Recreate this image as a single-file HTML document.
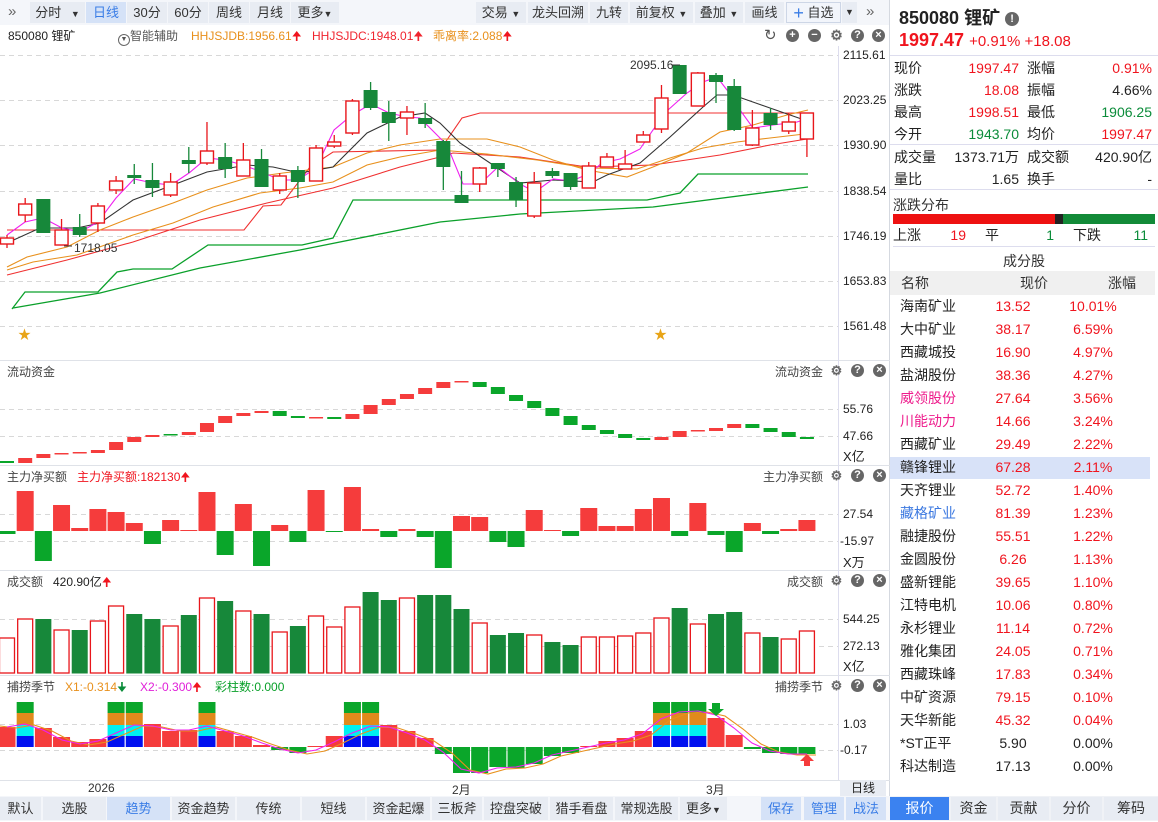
<!DOCTYPE html>
<html><head><meta charset="utf-8">
<style>
*{margin:0;padding:0;box-sizing:border-box}
body{width:1158px;height:821px;overflow:hidden;background:#fff;font-family:"Liberation Sans","Noto Sans CJK SC",sans-serif;font-size:13px;color:#222;position:relative}
.a{position:absolute;white-space:nowrap}
.btn{position:absolute;top:2px;height:21px;background:#e8ecf3;color:#333;font-size:13px;line-height:21px;text-align:center}
.bb{position:absolute;top:797px;height:23px;background:#e8ecf3;color:#333;font-size:13px;line-height:23px;text-align:center}
.btn.sel,.bb.sel{background:#d5e2f7;color:#3a7de6}
.ic{position:absolute;width:13px;height:13px;border-radius:50%;background:#666;color:#fff;font-size:11px;line-height:13px;text-align:center;font-weight:bold}
.r{color:#f0141e}.g{color:#0b8c3a}
.lbl{position:absolute;font-size:12px;color:#222}
.row{position:absolute;left:890px;width:262px;height:23px;font-size:14px;line-height:23px}
.row span{position:absolute}
</style></head><body>
<div class="a" style="left:0;top:0;width:890px;height:25px;background:#f4f6fa"></div>
<div class="a" style="left:8px;top:3px;font-size:15px;color:#666">»</div>
<div class="btn" style="left:30px;width:55px">分时 <span style="font-size:9px;margin-left:6px">▼</span></div>
<div class="btn sel" style="left:86px;width:40px">日线</div>
<div class="btn" style="left:127px;width:40px">30分</div>
<div class="btn" style="left:168px;width:40px">60分</div>
<div class="btn" style="left:209px;width:40px">周线</div>
<div class="btn" style="left:250px;width:40px">月线</div>
<div class="btn" style="left:291px;width:48px">更多<span style="font-size:9px">▼</span></div>
<div class="btn" style="left:476px;width:50px">交易 <span style="font-size:9px">▼</span></div>
<div class="btn" style="left:528px;width:60px">龙头回溯</div>
<div class="btn" style="left:590px;width:38px">九转</div>
<div class="btn" style="left:630px;width:63px">前复权 <span style="font-size:9px">▼</span></div>
<div class="btn" style="left:695px;width:48px">叠加 <span style="font-size:9px">▼</span></div>
<div class="btn" style="left:745px;width:39px">画线</div>
<div class="btn" style="left:786px;width:55px;background:#f2f5fb;border:1px solid #cdd6e6;line-height:19px"><span style="color:#3a7de6;font-size:18px;vertical-align:-2px">+</span> 自选</div>
<div class="btn" style="left:842px;width:15px;font-size:9px">▼</div>
<div class="a" style="left:866px;top:3px;font-size:15px;color:#666">»</div>
<div class="a" style="left:889px;top:0;width:1px;height:821px;background:#d5d9e0"></div>

<div class="a" style="left:8px;top:27px;font-size:12px">850080 锂矿</div>
<div class="a" style="left:118px;top:27px;font-size:12px;color:#555"><span style="display:inline-block;width:12px;height:12px;border:1px solid #666;border-radius:50%;font-size:7px;line-height:10px;text-align:center;vertical-align:-1px">▼</span>智能辅助</div>
<div class="a" style="left:191px;top:27px;font-size:12px;color:#e8901c">HHJSJDB:1956.61<span class="r">🠉</span></div>
<div class="a" style="left:312px;top:27px;font-size:12px;color:#f0242e">HHJSJDC:1948.01🠉</div>
<div class="a" style="left:433px;top:27px;font-size:12px;color:#e8901c">乖离率:2.088<span class="r">🠉</span></div>
<div class="a" style="left:764px;top:26px;font-size:15px;color:#555">↻</div>
<div class="ic" style="left:786px;top:29px">+</div>
<div class="ic" style="left:808px;top:29px">−</div>
<div class="ic" style="left:830px;top:29px;background:none;color:#666;font-size:14px">⚙</div>
<div class="ic" style="left:851px;top:29px">?</div>
<div class="ic" style="left:872px;top:29px">×</div>

<svg class="a" style="left:0;top:0" width="890" height="821" id="sv"></svg>

<div class="lbl" style="left:843px;top:48px">2115.61</div>
<div class="lbl" style="left:843px;top:93px">2023.25</div>
<div class="lbl" style="left:843px;top:138px">1930.90</div>
<div class="lbl" style="left:843px;top:184px">1838.54</div>
<div class="lbl" style="left:843px;top:229px">1746.19</div>
<div class="lbl" style="left:843px;top:274px">1653.83</div>
<div class="lbl" style="left:843px;top:319px">1561.48</div>
<div class="lbl" style="left:74px;top:241px;color:#333">1718.05</div>
<div class="lbl" style="left:630px;top:58px;color:#333">2095.16</div>
<div class="a" style="left:18px;top:324px;color:#e8a417;font-size:13px">★</div>
<div class="a" style="left:654px;top:324px;color:#e8a417;font-size:13px">★</div>

<div class="lbl" style="left:7px;top:363px;color:#444">流动资金</div>
<div class="lbl" style="left:775px;top:363px;color:#444">流动资金</div>
<div class="lbl" style="left:843px;top:402px">55.76</div>
<div class="lbl" style="left:843px;top:429px">47.66</div>
<div class="lbl" style="left:843px;top:446px;font-size:13px">X亿</div>

<div class="lbl" style="left:7px;top:468px;color:#444">主力净买额</div>
<div class="lbl" style="left:77px;top:468px;color:#f0141e">主力净买额:182130🠉</div>
<div class="lbl" style="left:763px;top:468px;color:#444">主力净买额</div>
<div class="lbl" style="left:843px;top:507px">27.54</div>
<div class="lbl" style="left:840px;top:534px">-15.97</div>
<div class="lbl" style="left:843px;top:552px;font-size:13px">X万</div>

<div class="lbl" style="left:7px;top:573px;color:#444">成交额</div>
<div class="lbl" style="left:53px;top:573px;color:#222">420.90亿<span class="r">🠉</span></div>
<div class="lbl" style="left:787px;top:573px;color:#444">成交额</div>
<div class="lbl" style="left:843px;top:612px">544.25</div>
<div class="lbl" style="left:843px;top:639px">272.13</div>
<div class="lbl" style="left:843px;top:656px;font-size:13px">X亿</div>

<div class="lbl" style="left:7px;top:678px;color:#444">捕捞季节</div>
<div class="lbl" style="left:65px;top:678px;color:#e8901c">X1:-0.314<span class="g">🠋</span></div>
<div class="lbl" style="left:140px;top:678px;color:#e020d8">X2:-0.300<span class="r">🠉</span></div>
<div class="lbl" style="left:215px;top:678px;color:#0aa02a">彩柱数:0.000</div>
<div class="lbl" style="left:775px;top:678px;color:#444">捕捞季节</div>
<div class="lbl" style="left:843px;top:717px">1.03</div>
<div class="lbl" style="left:840px;top:743px">-0.17</div>

<div class="lbl" style="left:88px;top:781px;color:#333">2026</div>
<div class="lbl" style="left:452px;top:781px;color:#333">2月</div>
<div class="lbl" style="left:706px;top:781px;color:#333">3月</div>
<div class="a" style="left:840px;top:780px;width:46px;height:16px;background:#e8ecf3;font-size:12px;line-height:16px;text-align:center">日线</div>

<div class="a" style="left:0;top:796px;width:890px;height:25px;background:#f4f6fa"></div>
<div class="bb" style="left:0;width:41px">默认</div>
<div class="bb" style="left:43px;width:63px">选股</div>
<div class="bb sel" style="left:107px;width:63px">趋势</div>
<div class="bb" style="left:172px;width:63px">资金趋势</div>
<div class="bb" style="left:237px;width:63px">传统</div>
<div class="bb" style="left:302px;width:63px">短线</div>
<div class="bb" style="left:367px;width:63px">资金起爆</div>
<div class="bb" style="left:432px;width:50px">三板斧</div>
<div class="bb" style="left:484px;width:64px">控盘突破</div>
<div class="bb" style="left:550px;width:63px">猎手看盘</div>
<div class="bb" style="left:615px;width:63px">常规选股</div>
<div class="bb" style="left:680px;width:47px">更多<span style="font-size:9px">▼</span></div>
<div class="bb sel" style="left:761px;width:40px">保存</div>
<div class="bb sel" style="left:804px;width:40px">管理</div>
<div class="bb sel" style="left:846px;width:40px">战法</div>
<div class="a" style="left:890px;top:796px;width:268px;height:25px;background:#f0f2f6"></div>
<div class="bb" style="left:890px;width:59px;background:#3b82f0;color:#fff;font-size:14px">报价</div>
<div class="bb" style="left:951px;width:45px;font-size:14px">资金</div>
<div class="bb" style="left:998px;width:51px;font-size:14px">贡献</div>
<div class="bb" style="left:1051px;width:51px;font-size:14px">分价</div>
<div class="bb" style="left:1104px;width:54px;font-size:14px">筹码</div>

<div class="a" style="left:899px;top:4px;font-size:18px;font-weight:bold;color:#222">850080 锂矿 <span style="display:inline-block;width:14px;height:14px;border-radius:50%;background:#666;color:#fff;font-size:11px;line-height:14px;text-align:center;vertical-align:2px">!</span></div>
<div class="a r" style="left:899px;top:30px;font-size:18px;font-weight:bold">1997.47 <span style="font-size:15px;font-weight:normal">+0.91% +18.08</span></div>
<div class="a" style="left:890px;top:55px;width:268px;height:1px;background:#dde"></div>
<div class="row" style="top:57px"><span style="left:4px">现价</span><span class="r" style="right:133px">1997.47</span><span style="left:137px">涨幅</span><span class="r" style="right:0">0.91%</span></div>
<div class="row" style="top:79px"><span style="left:4px">涨跌</span><span class="r" style="right:133px">18.08</span><span style="left:137px">振幅</span><span style="right:0">4.66%</span></div>
<div class="row" style="top:101px"><span style="left:4px">最高</span><span class="r" style="right:133px">1998.51</span><span style="left:137px">最低</span><span class="g" style="right:0">1906.25</span></div>
<div class="row" style="top:123px"><span style="left:4px">今开</span><span class="g" style="right:133px">1943.70</span><span style="left:137px">均价</span><span class="r" style="right:0">1997.47</span></div>
<div class="a" style="left:890px;top:144px;width:268px;height:1px;background:#dde"></div>
<div class="row" style="top:146px"><span style="left:4px">成交量</span><span style="right:133px">1373.71万</span><span style="left:137px">成交额</span><span style="right:0">420.90亿</span></div>
<div class="row" style="top:168px"><span style="left:4px">量比</span><span style="right:133px">1.65</span><span style="left:137px">换手</span><span style="right:0">-</span></div>
<div class="a" style="left:890px;top:189px;width:268px;height:1px;background:#dde"></div>
<div class="a" style="left:893px;top:195px;font-size:14px;color:#333">涨跌分布</div>
<div class="a" style="left:893px;top:214px;width:162px;height:10px;background:#ee1111"></div>
<div class="a" style="left:1055px;top:214px;width:8px;height:10px;background:#222"></div>
<div class="a" style="left:1063px;top:214px;width:92px;height:10px;background:#128a38"></div>
<div class="row" style="top:224px"><span style="left:3px">上涨</span><span class="r" style="right:186px">19</span><span style="left:95px">平</span><span class="g" style="right:98px">1</span><span style="left:183px">下跌</span><span class="g" style="right:4px">11</span></div>
<div class="a" style="left:893px;top:246px;width:262px;height:1px;background:#dde"></div>
<div class="a" style="left:1003px;top:251px;font-size:14px;color:#333">成分股</div>
<div class="a" style="left:890px;top:271px;width:265px;height:24px;background:#f0f0f0"></div>
<div class="row" style="top:272px;color:#333"><span style="left:11px">名称</span><span style="left:130px">现价</span><span style="left:218px">涨幅</span></div>
<div class="a" style="left:890px;top:457px;width:260px;height:22px;background:#d8e2f8"></div>
<div id="list"></div>

<script>
var NS="http://www.w3.org/2000/svg",sv=document.getElementById('sv');
function el(t,a){var e=document.createElementNS(NS,t);for(var k in a)e.setAttribute(k,a[k]);sv.appendChild(e);return e}
function X(i){return 7+18.18*i}
[360,465,570,675,780].forEach(function(y){el('line',{x1:0,x2:890,y1:y+.5,y2:y+.5,stroke:'#dfe2e8'})});
el('line',{x1:838.5,x2:838.5,y1:46,y2:780,stroke:'#dde'});
[55,100,145,191,236,281,326,409,436,514,541,619,646,724,750].forEach(function(y){el('line',{x1:0,x2:838,y1:y+.5,y2:y+.5,stroke:'#d8d8d8','stroke-dasharray':'5,4'})});
var C=[['r',238,244,235,248],['r',204,215,198,222],['g',199,233,199,233],['r',230,245,219,245],['g',227,235,214,237],['r',206,223,203,232],['r',181,190,176,194],['g',175,178,164,184],['g',180,188,163,197],['r',182,195,173,197],['g',160,164,147,173],['r',151,163,122,165],['g',157,169,143,178],['r',160,176,143,176],['g',159,187,149,187],['r',176,190,173,194],['g',170,182,166,198],['r',148,181,145,181],['r',142,146,135,148],['r',101,133,99,135],['g',90,108,82,110],['g',112,123,101,141],['r',112,118,106,135],['g',118,124,103,128],['g',141,167,140,190],['g',195,203,171,203],['r',168,184,167,192],['g',163,169,163,177],['g',182,200,177,207],['r',183,216,172,218],['g',171,176,168,178],['g',173,187,173,190],['r',166,188,162,188],['r',157,167,153,167],['r',164,169,150,169],['r',135,142,131,142],['r',98,129,85,133],['g',65,94,65,94],['r',73,106,72,106],['g',75,82,73,103],['g',86,130,79,131],['r',128,145,110,146],['g',113,125,108,130],['r',122,131,113,134],['r',113,139,113,157]];
function pl(p,c,w){el('polyline',{points:p,fill:'none',stroke:c,'stroke-width':w||1.1})}
pl('12,309 25,292 98,292 117,272 133,269 172,269 208,245 302,245 333,238 353,200 440,200 647,200 680,193 698,174 808,174','#0aa02a',1.3);
pl('13,308 100,293 200,268 300,250 440,222 520,214 653,207 808,187','#0aa02a',1.3);
pl('7,230 244,230 263,206 281,205 310,167 333,152 440,150 462,118 480,113 813,113','#f03030');
pl('7,275 67,260 133,242 200,220 267,203 333,188 400,167 440,157 453,153 520,157 587,167 653,165 720,155 770,145 813,138','#f03030');
pl('7,270 33,262 77,255 133,235 173,223 213,207 260,193 300,188 333,182 367,165 400,157 440,150 487,154 537,160 587,168 637,169 670,158 703,148 737,142 770,138 813,133','#e8901c');
pl('7,267 27,257 67,247 100,230 133,217 173,203 207,190 247,178 283,173 333,167 367,153 400,145 440,139 487,139 520,147 553,160 587,170 627,177 653,167 687,153 720,132 753,125 787,115 808,110','#e8901c');
pl('7,243 40,228 77,228 100,223 133,200 173,185 207,172 247,165 273,167 300,173 333,167 367,133 400,117 425,113 440,123 460,143 520,183 553,180 593,182 607,175 640,163 670,137 703,107 717,95 733,95 770,108 813,123','#333');
pl('7,235 25,222 43,218 62,228 80,232 98,222 116,198 134,179 153,183 171,185 189,173 207,158 225,160 243,165 262,172 280,180 298,180 316,168 334,130 352,115 371,104 389,113 407,117 420,118 447,145 463,184 480,184 498,167 520,184 535,192 553,179 572,181 590,173 602,163 620,159 640,149 653,130 668,110 687,93 703,82 717,77 727,90 740,110 753,128 773,125 797,122 813,117','#f020f0');
C.forEach(function(c,i){var x=X(i),col=c[0]=='r'?'#e8161b':'#17883a';
 el('line',{x1:x,x2:x,y1:c[3],y2:c[4],stroke:col,'stroke-width':1.3});
 if(c[0]=='r')el('rect',{x:x-6.5,y:c[1],width:13,height:Math.max(c[2]-c[1],1),fill:'#fff',stroke:col,'stroke-width':1.4});
 else el('rect',{x:x-7,y:c[1],width:14,height:Math.max(c[2]-c[1],1.5),fill:col});});
el('line',{x1:64,x2:72,y1:246,y2:246,stroke:'#333'});el('line',{x1:672,x2:680,y1:65,y2:65,stroke:'#333'});
var F=[['g',461,463],['r',458,463],['r',454,458],['r',453,454],['r',452,453],['r',450,453],['r',442,450],['r',437,442],['r',435,437],['g',434,435],['r',432,435],['r',423,432],['r',416,423],['r',413,416],['r',411,413],['g',411,416],['g',416,418],['r',417,418],['g',417,419],['r',414,419],['r',405,414],['r',399,405],['r',394,399],['r',388,394],['r',382,388],['r',381,382],['g',382,387],['g',387,394],['g',395,401],['g',401,408],['g',408,416],['g',416,425],['g',425,430],['g',430,434],['g',434,438],['g',438,440],['r',437,440],['r',431,437],['r',430,431],['r',428,431],['r',424,428],['g',424,428],['g',428,432],['g',432,437],['g',437,439]];
F.forEach(function(f,i){el('rect',{x:X(i)-7,y:f[1],width:14,height:Math.max(f[2]-f[1],1.5),fill:f[0]=='r'?'#f53c3c':'#0aa62a'})});
var M=[-3,491,-561,505,528,509,512,523,-544,520,530,492,-555,504,-566,525,-542,490,-532,487,529,-537,529,-537,-568,516,517,-542,-547,510,530,-536,508,526,526,509,498,-536,503,-535,-552,523,-534,529,520];
M.forEach(function(v,i){var x=X(i)-8.5;if(v==-3){el('rect',{x:x,y:531,width:17,height:3,fill:'#0aa62a'});return}
 if(v>0)el('rect',{x:x,y:v,width:17,height:531-v,fill:'#f53c3c'});else el('rect',{x:x,y:531,width:17,height:-v-531,fill:'#0aa62a'})});
var V=['r638','r619','g619','r630','g630','r621','r606','g614','g619','r626','g615','r598','g601','r611','g614','r632','g626','r616','r627','r607','g592','g600','r598','g595','g595','g609','r623','g635','g633','r635','g642','g645','r637','r637','r636','r633','r618','g608','r624','g614','g612','r633','g637','r639','r631'];
V.forEach(function(v,i){var y=+v.slice(1),x=X(i);if(v[0]=='r')el('rect',{x:x-7.5,y:y,width:15,height:673-y,fill:'#fff',stroke:'#e8161b','stroke-width':1.3});else el('rect',{x:x-8,y:y,width:16,height:673.5-y,fill:'#17883a'})});
var S=[727,'s',728,737,742,739,'s','s',724,731,730,'s',731,736,745,-750,-753,746,736,'s','s',725,731,738,-754,-773,-773,-767,-768,-764,-756,-753,746,741,738,731,'s','s','s',718,735,-749,-753,-754,-754];
S.forEach(function(v,i){var x=X(i)-8.5;
 if(v=='s'){el('rect',{x:x,y:736,width:17,height:11,fill:'#0010f0'});el('rect',{x:x,y:725,width:17,height:11,fill:'#00f0f0'});el('rect',{x:x,y:713,width:17,height:12,fill:'#e08a1c'});el('rect',{x:x,y:702,width:17,height:11,fill:'#0aa62a'});return}
 if(v>0)el('rect',{x:x,y:v,width:17,height:747-v,fill:'#f53c3c'});else el('rect',{x:x,y:747,width:17,height:-v-747,fill:'#0aa62a'})});
var mg='7,727 25,724 43,730 62,740 80,744 98,741 116,733 134,725 153,726 171,730 189,730 207,726 225,731 243,736 262,743 280,749 298,753 316,750 334,742 352,733 371,726 389,727 407,733 425,740 443,752 461,769 479,773 497,768 516,767 534,763 552,755 570,751 588,747 606,743 624,740 642,734 661,719 679,712 698,711 716,715 734,728 752,743 770,751 788,754 807,754';
var og=mg.split(' ').map(function(p){var a=p.split(',');return (+a[0]+9)+','+(+a[1]+1)}).join(' ');
pl('0,726 '+og,'#e8901c');pl(mg,'#f020f0');
el('polygon',{points:'712,703 720,703 720,709 724,709 716,716 708,709 712,709',fill:'#0aa62a'});
el('polygon',{points:'804,766 810,766 810,761 814,761 807,754 800,761 804,761',fill:'#f53c3c'});
[370,475,580,685].forEach(function(y){
 var t=document.createElement('div');t.className='ic';t.style.cssText='left:830px;top:'+(y-6)+'px;background:none;color:#666;font-size:13px';t.textContent='⚙';document.body.appendChild(t);
 t=document.createElement('div');t.className='ic';t.style.cssText='left:851px;top:'+(y-6)+'px';t.textContent='?';document.body.appendChild(t);
 t=document.createElement('div');t.className='ic';t.style.cssText='left:873px;top:'+(y-6)+'px';t.textContent='×';document.body.appendChild(t);});
var L=[['海南矿业','13.52','10.01%'],['大中矿业','38.17','6.59%'],['西藏城投','16.90','4.97%'],['盐湖股份','38.36','4.27%'],['威领股份','27.64','3.56%','#ee1c8c'],['川能动力','14.66','3.24%','#ee1c8c'],['西藏矿业','29.49','2.22%'],['赣锋锂业','67.28','2.11%'],['天齐锂业','52.72','1.40%'],['藏格矿业','81.39','1.23%','#3b78e0'],['融捷股份','55.51','1.22%'],['金圆股份','6.26','1.13%'],['盛新锂能','39.65','1.10%'],['江特电机','10.06','0.80%'],['永杉锂业','11.14','0.72%'],['雅化集团','24.05','0.71%'],['西藏珠峰','17.83','0.34%'],['中矿资源','79.15','0.10%'],['天华新能','45.32','0.04%'],['*ST正平','5.90','0.00%',0,1],['科达制造','17.13','0.00%',0,1]];
var h='';L.forEach(function(r,k){var c=r[4]?'#222':'#f0141e';h+='<div class="row" style="top:'+(295+23*k)+'px"><span style="left:10px;color:'+(r[3]||'#222')+'">'+r[0]+'</span><span style="left:93px;width:60px;text-align:center;color:'+c+'">'+r[1]+'</span><span style="left:163px;width:80px;text-align:center;color:'+c+'">'+r[2]+'</span></div>'});
document.getElementById('list').innerHTML=h;
</script>
</body></html>
